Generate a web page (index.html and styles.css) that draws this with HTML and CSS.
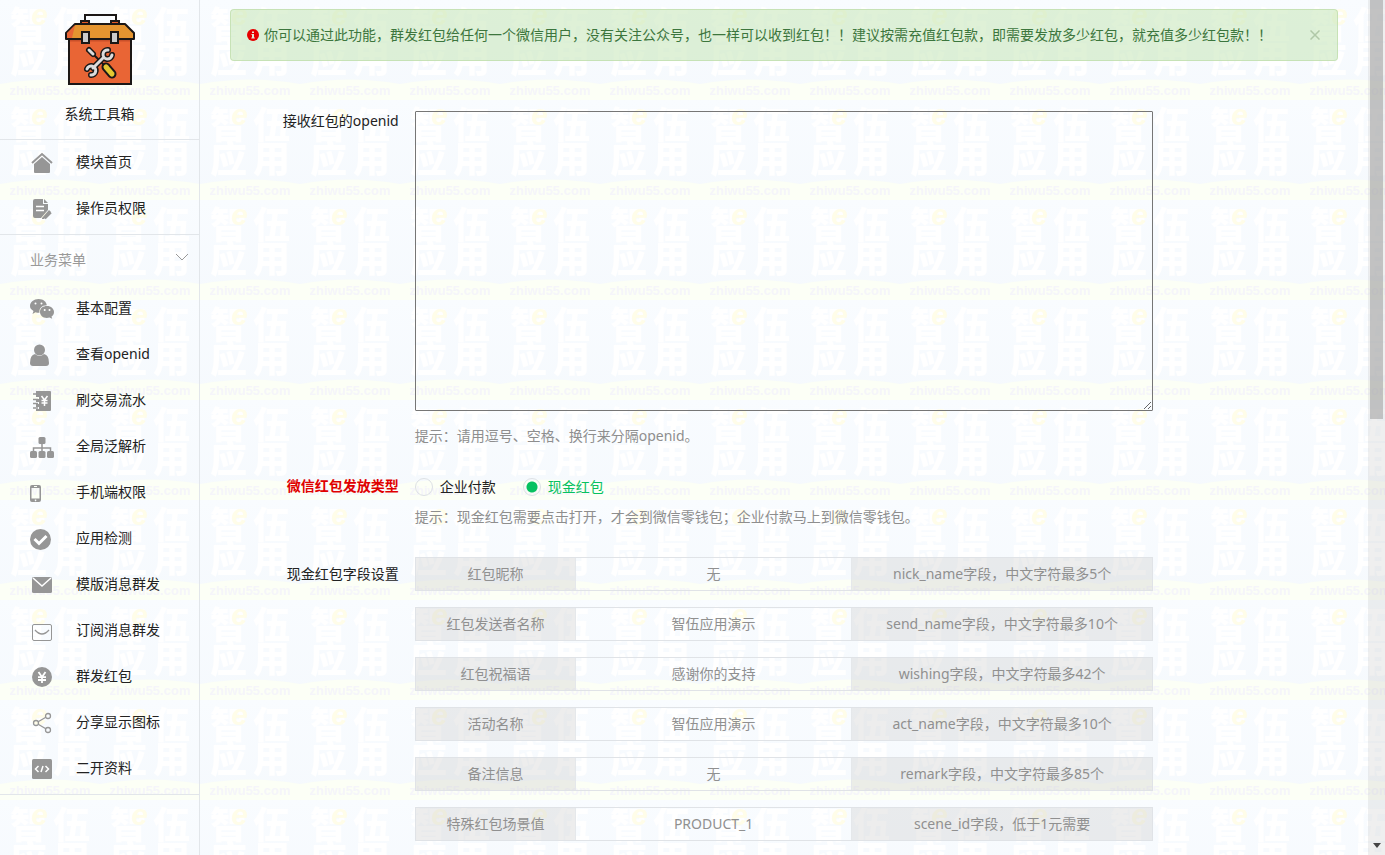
FILE: index.html
```html
<!DOCTYPE html>
<html lang="zh-CN">
<head>
<meta charset="utf-8">
<title>系统工具箱</title>
<link rel="stylesheet" href="styles.css">
</head>
<body>
<svg class="watermark" aria-hidden="true">
  <defs>
    <linearGradient id="sky" x1="0" y1="0" x2="0" y2="1">
      <stop offset="0" stop-color="#f9fcff"/><stop offset="1" stop-color="#f5f9fd"/>
    </linearGradient>
    <pattern id="tile" width="100" height="100" patternUnits="userSpaceOnUse">
      <rect width="100" height="100" fill="url(#sky)"/>
      <path d="M0 84Q50 75 100 84V100H0z" fill="#fcfff6"/>
      <g class="mark-big"><text x="10" y="39">智</text><text x="53" y="39">伍</text><text x="10" y="73">应</text><text x="53" y="73">用</text></g>
      <text class="mark-e" x="31" y="25">e</text>
      <text class="mark-url" x="50" y="95">zhiwu55.com</text>
    </pattern>
  </defs>
  <rect width="100%" height="100%" fill="url(#tile)"/>
</svg>

<div class="shell">
  <aside class="sidebar">
    <div class="brand">
      <svg class="logo" viewBox="0 0 72 72" aria-hidden="true">
        <path d="M21 9V1h31v8" fill="none" stroke="#1b1716" stroke-width="2"/>
        <path d="M17 10V7h8v3M47 10V7h8v3" fill="#e65a25" stroke="#1b1716" stroke-width="2"/>
        <path d="M5 24h62v46H5z" fill="#e96535" stroke="#1b1716" stroke-width="2"/>
        <path d="M6 26h60" stroke="#c9502a" stroke-width="3"/>
        <path d="M11 10h50l9 9v6H2v-6z" fill="#e59530" stroke="#1b1716" stroke-width="2" stroke-linejoin="round"/>
        <path d="M11 11l-8 8v5h5z" fill="#e96535"/>
        <path d="M18 18h7v11h-7zM47 18h7v11h-7z" fill="#ccc" stroke="#1b1716" stroke-width="2"/>
        <g fill="none" stroke-linecap="round">
          <path d="M28 39l12 12" stroke="#1b1716" stroke-width="2"/>
          <path d="M25 36l4 4" stroke="#1b1716" stroke-width="6"/>
          <path d="M25 36l4 4" stroke="#ddd" stroke-width="3"/>
          <path d="M42 53l6 7" stroke="#1b1716" stroke-width="9"/>
          <path d="M42 53l6 7" stroke="#e3c832" stroke-width="5"/>
          <g stroke="#1b1716" stroke-width="6"><path d="M39 44L29 54M44 36a4.500 4.500 0 1 0 4 5M27 61a4.500 4.500 0 1 0-4-6"/></g>
          <g stroke="#dcdcdc" stroke-width="3"><path d="M39 44L29 54M44 36a4.500 4.500 0 1 0 4 5M27 61a4.500 4.500 0 1 0-4-6"/></g>
        </g>
      </svg>
      <div class="brand-name">系统工具箱</div>
    </div>
    <nav class="menu">
      <a href="#"><svg viewBox="0 0 24 24"><path d="M2 12L12 3l10 9" fill="none" stroke="currentColor" stroke-width="2"/><path d="M12 6l8 7v8q0 1-1 1H5q-1 0-1-1v-8z"/></svg>模块首页</a>
      <a href="#"><svg viewBox="0 0 24 24"><path d="M5 2h8v5h5v6l-7 8H5q-2 0-2-2V4q0-2 2-2zM14 2l4 4h-4zM12 21l7-8 2 2-7 7h-2z"/><path d="M6 9.500h8M6 13.500h8" stroke="#fff" stroke-width="1.500"/><path d="M15 21.500l6-6" stroke="currentColor" stroke-width="2"/></svg>操作员权限</a>
    </nav>
    <button class="menu-title" type="button">业务菜单<svg viewBox="0 0 14 8"><path d="M1 1l6 6 6-6" fill="none" stroke="currentColor"/></svg></button>
    <nav class="menu menu-business">
      <a href="#"><svg viewBox="0 0 24 24"><path d="M8.500 2c5 0 8 3 8.300 6.200-5 0-8 3.300-7.300 7.600q-2 .2-4-.6l-3 1.800 1-3C1 12.500 0 11 0 9c0-4 4-7 8.500-7z"/><path d="M17 9c4 0 7 2.700 7 6 0 2-1 3.500-2.500 4.500l.7 2.300-2.700-1.200C14 22 10 19 10 15s3-6 7-6z"/><g fill="#fff"><circle cx="5.500" cy="6.500" r="1"/><circle cx="11.500" cy="6.500" r="1"/><circle cx="14.700" cy="13" r="1"/><circle cx="19.500" cy="13" r="1"/></g></svg>基本配置</a>
      <a href="#"><svg viewBox="0 0 24 24"><circle cx="9.500" cy="7" r="5.500"/><path d="M5 11q4.500 4 9 0 5 1 5 9 0 3-3 3H3q-3 0-3-3 0-8 5-9z"/></svg>查看openid</a>
      <a href="#"><svg viewBox="0 0 24 24"><path d="M6 2h14q1 0 1 1v18q0 1-1 1H6v-2h3v-2H6v-3h3v-2H6v-3h3V8H6V5z"/><path d="M3 5h5M3 10.500h5M3 14.500h5M3 19h5" stroke="currentColor" stroke-width="1.500"/><path d="M11.500 7l3 4 3-4M14.500 11v6M11.500 11.500h6M11.500 14h6" fill="none" stroke="#fff" stroke-width="1.500"/></svg>刷交易流水</a>
      <a href="#"><svg viewBox="0 0 24 24"><rect x="8.500" y="2" width="7" height="7" rx="1.500"/><rect y="16" width="7" height="7" rx="1.500"/><rect x="8.500" y="16" width="7" height="7" rx="1.500"/><rect x="17" y="16" width="7" height="7" rx="1.500"/><path d="M12 8v9M3.500 17v-4h17v4" fill="none" stroke="currentColor" stroke-width="1.500"/></svg>全局泛解析</a>
      <a href="#"><svg viewBox="0 0 24 24"><path fill-rule="evenodd" d="M2 4h7q2 0 2 2v13q0 2-2 2H2q-2 0-2-2V6q0-2 2-2zM1.500 7v10.500h8V7zM4 5v1h3V5zM5.500 18.500a.8.8 0 1 0 .1 0z"/></svg>手机端权限</a>
      <a href="#"><svg viewBox="0 0 24 24"><circle cx="10.500" cy="12.500" r="10.500"/><path d="M4.500 12l4.500 4.500 7.500-7.500" fill="none" stroke="#fff" stroke-width="3"/></svg>应用检测</a>
      <a href="#"><svg viewBox="0 0 24 24"><rect x="2" y="4" width="20" height="16" rx="1.500"/><path d="M3 5l9 8 9-8" fill="none" stroke="#fff" stroke-width="1.500"/></svg>模版消息群发</a>
      <a href="#"><svg viewBox="0 0 24 24"><rect x="2.500" y="5.500" width="19" height="16" rx="1.500" fill="none" stroke="currentColor"/><path d="M5 11q7 8 14 0" fill="none" stroke="currentColor" stroke-width="1.300"/></svg>订阅消息群发</a>
      <a href="#"><svg viewBox="0 0 24 24"><circle cx="12" cy="12" r="10"/><path d="M8.500 7l3.500 5 3.500-5M12 12v6M8 12.200h8M8 15h8" fill="none" stroke="#fff" stroke-width="1.800"/></svg>群发红包</a>
      <a href="#"><svg viewBox="0 0 24 24"><g fill="none" stroke="currentColor" stroke-width="1.300"><circle cx="6" cy="12" r="2.500"/><circle cx="18" cy="5" r="2.500"/><circle cx="18" cy="19" r="2.500"/><path d="M8.200 10.700l7.600-4.400M8.200 13.300l7.600 4.400"/></g></svg>分享显示图标</a>
      <a href="#"><svg viewBox="0 0 24 24"><rect x="2" y="2" width="20" height="20" rx="1.500"/><path d="M8.500 9l-3 3 3 3M15.500 9l3 3-3 3M13 9l-2 6" fill="none" stroke="#fff" stroke-width="1.500"/></svg>二开资料</a>
    </nav>
  </aside>

  <main class="content">
    <div class="alert">
      <svg viewBox="0 0 12 12" aria-hidden="true"><circle cx="6" cy="6" r="6" fill="#e60000"/><path d="M5 2.500h2v1.500H5zM4.500 5H7v3.500h.8v1H4.300v-1H5V6h-.5z" fill="#e0edd8"/></svg>
      <span class="alert-text">你可以通过此功能，群发红包给任何一个微信用户，没有关注公众号，也一样可以收到红包！！建议按需充值红包款，即需要发放多少红包，就充值多少红包款！！</span>
      <button type="button" class="close" aria-label="关闭"><svg viewBox="0 0 10 10"><path d="M.5.500l9 9M9.500.500l-9 9" stroke="currentColor" stroke-width="1.500"/></svg></button>
    </div>

    <form class="form">
      <div class="group">
        <label class="group-label" for="openids">接收红包的openid</label>
        <div>
          <textarea id="openids"></textarea>
          <p class="hint">提示：请用逗号、空格、换行来分隔openid。</p>
        </div>
      </div>
      <div class="group" role="radiogroup" aria-labelledby="type-label">
        <span class="group-label required" id="type-label">微信红包发放类型</span>
        <div>
          <div class="radios">
            <label><input type="radio" name="type">企业付款</label>
            <label><input type="radio" name="type" checked>现金红包</label>
          </div>
          <p class="hint">提示：现金红包需要点击打开，才会到微信零钱包；企业付款马上到微信零钱包。</p>
        </div>
      </div>
      <div class="group">
        <span class="group-label field-label">现金红包字段设置</span>
        <div class="fields">
          <div class="field"><label for="f1">红包昵称</label><input id="f1" type="text" value="无"><span>nick_name字段，中文字符最多5个</span></div>
          <div class="field"><label for="f2">红包发送者名称</label><input id="f2" type="text" value="智伍应用演示"><span>send_name字段，中文字符最多10个</span></div>
          <div class="field"><label for="f3">红包祝福语</label><input id="f3" type="text" value="感谢你的支持"><span>wishing字段，中文字符最多42个</span></div>
          <div class="field"><label for="f4">活动名称</label><input id="f4" type="text" value="智伍应用演示"><span>act_name字段，中文字符最多10个</span></div>
          <div class="field"><label for="f5">备注信息</label><input id="f5" type="text" value="无"><span>remark字段，中文字符最多85个</span></div>
          <div class="field"><label for="f6">特殊红包场景值</label><input id="f6" type="text" value="PRODUCT_1"><span>scene_id字段，低于1元需要</span></div>
        </div>
      </div>
    </form>
  </main>

  <div class="scrollbar" aria-hidden="true">
    <div class="thumb"></div>
    <svg viewBox="0 0 8 5"><path d="M0 0h8L4 5z"/></svg>
  </div>
</div>
</body>
</html>
```
FILE: styles.css
```css
* { box-sizing: border-box; }

body {
  margin: 0;
  font: 14px/20px "Noto Sans", "Noto Sans CJK SC", sans-serif;
  color: #222;
  background: #f8fbff;
}

button, input, textarea { font: inherit; color: inherit; }

/* Tiled backdrop */
.watermark {
  position: absolute;
  inset: 0;
  width: 100%;
  height: 100%;
  z-index: -1;
}
.mark-big {
  font: 900 37px "Noto Sans CJK SC", sans-serif;
  fill: #fff;
}
.mark-e {
  font: italic 900 30px "Liberation Sans", sans-serif;
  fill: #fffde9;
}
.mark-url {
  font: bold 13px "Liberation Sans", sans-serif;
  fill: #f5f5fa;
  text-anchor: middle;
}

.shell {
  display: flex;
  height: 100vh;
  overflow: hidden;
}

/* Sidebar */
.sidebar {
  flex: 0 0 200px;
  border-right: 1px solid #e2e6ea;
}
.brand {
  display: flex;
  flex-direction: column;
  align-items: center;
  gap: 18px;
  padding: 14px 0 15px;
  border-bottom: 1px solid #e2e6ea;
}
.logo { width: 72px; height: 72px; }
.menu {
  padding-bottom: 2px;
  border-bottom: 1px solid #e2e6ea;
}
.menu a {
  display: flex;
  align-items: center;
  gap: 22px;
  height: 46px;
  padding: 0 0 2px 30px;
  color: #222;
  text-decoration: none;
}
.menu svg {
  width: 24px;
  height: 24px;
  margin-top: 2px;
  color: #969696;
  fill: currentColor;
}
.menu-title {
  display: flex;
  align-items: center;
  justify-content: space-between;
  width: 100%;
  height: 51px;
  padding: 0 10px 1px 30px;
  border: 0;
  background: none;
  color: #999;
}
.menu-title svg { width: 14px; height: 8px; margin-bottom: 6px; }

/* Main */
.content {
  flex: 1;
  min-width: 0;
  padding: 9px 30px 0;
}
.alert {
  display: flex;
  align-items: center;
  gap: 5px;
  min-height: 52px;
  padding: 0 17px 0 16px;
  border: 1px solid rgba(190, 221, 170, .7);
  border-radius: 4px;
  background: rgba(201, 231, 188, .6);
  color: #3c763d;
}
.alert > svg { flex: none; width: 12px; height: 12px; }
.alert-text { flex: 1; }
.close {
  display: flex;
  padding: 0;
  border: 0;
  background: none;
  color: #b0c8a8;
}
.close svg { width: 10px; height: 10px; }

.form { margin-top: 50px; }
.group {
  display: grid;
  grid-template-columns: 2fr 8fr 2fr;
  margin-bottom: 30px;
}
.group-label { padding-right: 16px; text-align: right; }
.required { color: #e00000; font-weight: bold; }
.field-label { padding-top: 7px; }
textarea {
  display: block;
  width: 100%;
  height: 300px;
  border: 1px solid #767676;
  border-radius: 1px;
  background: transparent;
}
.hint { margin: 10px 0 0; color: #8e8e8e; }
textarea + .hint { margin-top: 15px; }

.radios { display: flex; gap: 27px; padding-top: 1px; }
.radios label { display: flex; align-items: center; gap: 7px; }
.radios input {
  appearance: none;
  width: 18px;
  height: 18px;
  margin: 0;
  border: 1px solid #dde1e5;
  border-radius: 50%;
}
.radios input:checked { background: radial-gradient(circle, #07c160 5px, transparent 6px); }
.radios label:has(:checked) { color: #07c160; }

.fields { display: grid; gap: 16px; }
.field {
  display: grid;
  grid-template-columns: 160fr 277fr 301fr;
  height: 34px;
  border: 1px solid #e0e3e7;
  color: #909090;
  line-height: 32px;
  text-align: center;
}
.field label, .field span { background: rgba(204, 204, 204, .35); }
.field input {
  min-width: 0;
  padding: 0;
  border: 0;
  border-left: 1px solid #e5e8eb;
  border-right: 1px solid #e5e8eb;
  background: transparent;
  text-align: center;
}

/* Page scroll track */
.scrollbar {
  display: flex;
  flex: 0 0 17px;
  flex-direction: column;
  justify-content: space-between;
  align-items: center;
  padding-bottom: 7px;
  background: rgba(190, 190, 190, .25);
}
.thumb { width: 13px; height: 49vh; background: rgba(150, 150, 150, .5); }
.scrollbar svg { width: 8px; height: 5px; fill: #444; }
```
